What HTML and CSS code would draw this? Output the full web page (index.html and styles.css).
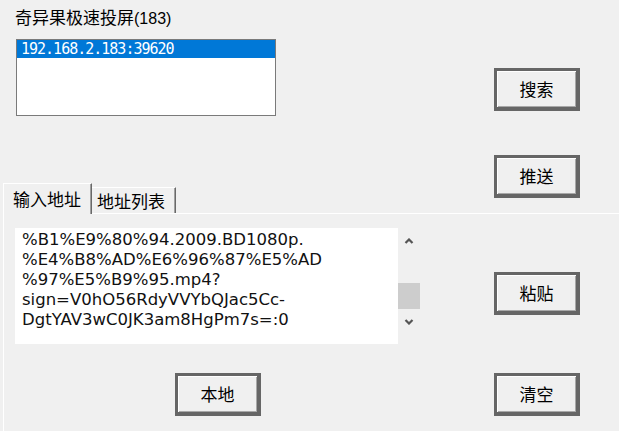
FILE: index.html
```html
<!DOCTYPE html>
<html lang="zh-CN">

<head>
    <meta charset="UTF-8">
    <meta name="viewport" content="width=device-width, initial-scale=1.0">
    <title>奇异果极速投屏</title>
    <link rel="stylesheet" href="styles.css">
</head>

<body>
    <div class="dialog">

        <div class="top">
            <div class="left-col">
                <div class="title">奇异果极速投屏<span class="num">(183)</span></div>

                <div class="device-list">
                    <div class="device selected">192.168.2.183:39620</div>
                </div>

                <div class="tabs">
                    <div class="tab active">输入地址</div>
                    <div class="tab">地址列表</div>
                </div>
            </div>

            <div class="right-col">
                <button class="btn btn-search">搜索</button>
                <button class="btn btn-push">推送</button>
            </div>
        </div>

        <div class="panel">
            <div class="panel-row">
                <div class="editor">
                    <div class="editor-text">
                        <div>%B1%E9%80%94.2009.BD1080p.</div>
                        <div>%E4%B8%AD%E6%96%87%E5%AD</div>
                        <div>%97%E5%B9%95.mp4?</div>
                        <div>sign=V0hO56RdyVVYbQJac5Cc-</div>
                        <div>DgtYAV3wC0JK3am8HgPm7s=:0</div>
                    </div>
                    <div class="scrollbar">
                        <svg class="arrow" width="10" height="6" viewBox="0 0 10 6">
                            <polyline points="1.5,5 5,1.5 8.5,5" fill="none" stroke="#555" stroke-width="2.2" />
                        </svg>
                        <div class="thumb"></div>
                        <svg class="arrow" width="10" height="6" viewBox="0 0 10 6">
                            <polyline points="1.5,1 5,4.5 8.5,1" fill="none" stroke="#555" stroke-width="2.2" />
                        </svg>
                    </div>
                </div>
                <button class="btn btn-paste">粘贴</button>
            </div>

            <div class="panel-row bottom-row">
                <button class="btn btn-local">本地</button>
                <button class="btn btn-clear">清空</button>
            </div>
        </div>

    </div>
</body>

</html>
```

FILE: styles.css
```css
body {
    margin: 0;
    width: 619px;
    height: 431px;
    overflow: hidden;
    background-color: #f0f0f0;
    font-family: "Liberation Sans", "Noto Sans CJK SC", sans-serif;
    color: #000;
}

.top {
    display: flex;
}

.left-col {
    width: 494px;
    display: flex;
    flex-direction: column;
}

.title {
    margin: 10px 0 0 15px;
    font-size: 17px;
    line-height: 18px;
    height: 18px;
}

.num {
    font-size: 16px;
}

.device-list {
    margin: 11px 0 0 16px;
    width: 260px;
    height: 77px;
    box-sizing: border-box;
    border: 1px solid #7a7a7a;
    background-color: #fff;
}

.device {
    height: 18px;
    line-height: 18px;
    padding-left: 4px;
    font-family: "DejaVu Sans Mono", monospace;
    font-size: 15px;
    letter-spacing: -1px;
}

.selected {
    background-color: #0078d7;
    color: #fff;
}

.tabs {
    display: flex;
    align-items: flex-end;
    margin: 67px 0 0 3px;
    height: 30px;
}

.tab {
    height: 26px;
    box-sizing: border-box;
    padding: 3px 0 0 5px;
    width: 84px;
    font-family: "Noto Sans CJK SC", sans-serif;
    font-size: 17px;
    line-height: 19px;
    border-top: 1px solid #fff;
    border-right: 1px solid #696969;
    box-shadow: inset -1px 0 0 #a0a0a0;
}

.tab.active {
    position: relative;
    height: 31px;
    margin-bottom: -1px;
    width: 89px;
    padding: 5px 0 0 9px;
    border-left: 1px solid #fff;
    background-color: #f0f0f0;
}

.right-col {
    display: flex;
    flex-direction: column;
}

.btn {
    width: 86px;
    height: 43px;
    box-sizing: border-box;
    padding: 0 0 2px 0;
    border: 3px solid #666;
    border-right-width: 4px;
    border-bottom-width: 4px;
    background-color: #f0f0f0;
    box-shadow: inset 1px 1px 0 #fff, inset -1px -1px 0 #a8a8a8;
    font-family: "Noto Sans CJK SC", sans-serif;
    font-size: 17px;
    color: #000;
}

.btn-search {
    margin-top: 68px;
}

.btn-push {
    margin-top: 44px;
}

.panel {
    margin-left: 3px;
    border-top: 1px solid #fff;
    border-left: 1px solid #fff;
    padding: 14px 0 0 11px;
    height: 203px;
}

.panel-row {
    display: flex;
    align-items: flex-start;
}

.editor {
    display: flex;
    width: 405px;
    height: 116px;
}

.editor-text {
    width: 383px;
    box-sizing: border-box;
    background-color: #fff;
    padding: 2px 0 0 7px;
    font-family: "DejaVu Sans", sans-serif;
    font-size: 16.5px;
    line-height: 20px;
    color: #111;
}

.scrollbar {
    width: 22px;
    display: flex;
    flex-direction: column;
    align-items: center;
}

.arrow {
    margin: 10px 0;
}

.thumb {
    width: 22px;
    height: 26px;
    margin-top: 29px;
    background-color: #cdcdcd;
}

.btn-paste {
    margin: 44px 0 0 74px;
}

.bottom-row {
    margin-top: 29px;
}

.btn-local {
    margin-left: 160px;
}

.btn-clear {
    margin-left: 233px;
}
```
